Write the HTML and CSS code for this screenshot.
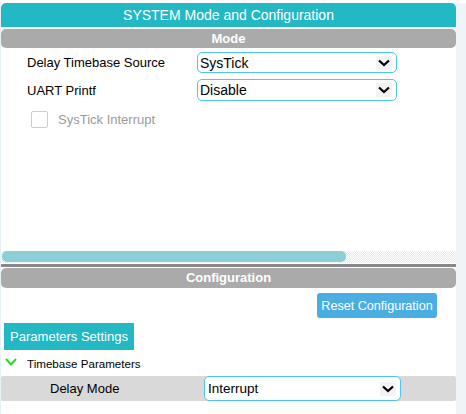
FILE: index.html
```html
<!DOCTYPE html>
<html>
<head>
<meta charset="utf-8">
<link rel="stylesheet" href="styles.css">
</head>
<body>
<div class="page">
  <div class="edge"></div>
  <div class="panel">
    <div class="title">SYSTEM Mode and Configuration</div>
    <div class="section-head mode-head">Mode</div>
    <div class="mode-body">
      <div class="row">
        <div class="label">Delay Timebase Source</div>
        <div class="select">
          <span class="value">SysTick</span>
          <span class="arrow"><svg width="12" height="8" viewBox="0 0 12 8"><path d="M1 1.5 L6 6 L11 1.5" fill="none" stroke="#000" stroke-width="2.2"/></svg></span>
        </div>
      </div>
      <div class="row row2">
        <div class="label">UART Printf</div>
        <div class="select">
          <span class="value">Disable</span>
          <span class="arrow"><svg width="12" height="8" viewBox="0 0 12 8"><path d="M1 1.5 L6 6 L11 1.5" fill="none" stroke="#000" stroke-width="2.2"/></svg></span>
        </div>
      </div>
      <div class="check-row">
        <span class="checkbox"></span>
        <span class="check-label">SysTick Interrupt</span>
      </div>
    </div>
    <div class="scrollbar"><div class="thumb"></div></div>
    <div class="divider"></div>
    <div class="section-head config-head">Configuration</div>
    <div class="config-body">
      <div class="reset-row"><button class="reset">Reset Configuration</button></div>
      <div class="tabs"><div class="tab">Parameters Settings</div></div>
      <div class="group">
        <svg class="chev" width="12" height="8" viewBox="0 0 12 8"><path d="M1 1 L6 6.5 L11 1" fill="none" stroke="#22dd22" stroke-width="2"/></svg>
        <span>Timebase Parameters</span>
      </div>
      <div class="param">
        <div class="param-label">Delay Mode</div>
        <div class="select param-select">
          <span class="value">Interrupt</span>
          <span class="arrow"><svg width="12" height="8" viewBox="0 0 12 8"><path d="M1 1.5 L6 6 L11 1.5" fill="none" stroke="#000" stroke-width="2.2"/></svg></span>
        </div>
      </div>
    </div>
  </div>
  <div class="side"></div>
</div>
</body>
</html>
```
FILE: styles.css
```css
html, body {
  margin: 0;
  padding: 0;
  background: #fff;
}
body {
  font-family: "Liberation Sans", Arial, sans-serif;
  font-size: 13px;
  color: #000;
}
.page {
  display: flex;
  width: 466px;
  height: 414px;
  padding-top: 3px;
  box-sizing: border-box;
  overflow: hidden;
}
.edge {
  width: 1px;
  background: #e6f1f6;
}
.side {
  width: 10px;
  background: #eef4f7;
}
.panel {
  width: 455px;
  display: flex;
  flex-direction: column;
}
.title {
  height: 24px;
  line-height: 24px;
  background: #22b8c4;
  color: #fff;
  font-size: 14px;
  text-align: center;
  border-radius: 5px 5px 0 0;
}
.section-head {
  background: #aaaaaa;
  color: #fff;
  font-weight: bold;
  font-size: 13px;
  text-align: center;
  border-radius: 5px;
}
.mode-head {
  margin-top: 2px;
  height: 19px;
  line-height: 19px;
}
.mode-body {
  height: 203px;
  padding-top: 4px;
  box-sizing: border-box;
}
.row {
  display: flex;
  align-items: center;
  height: 21px;
}
.row2 {
  margin-top: 6px;
  height: 22px;
}
.label {
  width: 170px;
  padding-left: 26px;
}
.select {
  box-sizing: border-box;
  width: 200px;
  height: 100%;
  border: 1px solid #4cc4f4;
  border-radius: 5px;
  display: flex;
  align-items: center;
  justify-content: space-between;
  padding: 0 4px 0 2px;
  background: #fff;
  font-size: 14px;
}
.value {
  line-height: 1;
}
.arrow {
  width: 16px;
  height: 14px;
  display: flex;
  align-items: center;
  justify-content: center;
  background: #f3f3f3;
}
.check-row {
  display: flex;
  align-items: center;
  margin-top: 10px;
  padding-left: 30px;
}
.checkbox {
  width: 17px;
  height: 17px;
  box-sizing: border-box;
  border: 1px solid #cccccc;
  border-radius: 2px;
  background: #fff;
}
.check-label {
  margin-left: 10px;
  color: #9a9a9a;
}
.scrollbar {
  height: 12px;
  background-color: #fff;
  background-image: repeating-conic-gradient(#d6ecf6 0% 25%, #ffffff 0% 50%);
  background-size: 2px 2px;
}
.thumb {
  width: 344px;
  height: 11px;
  margin-left: 1px;
  background: #8ccfd6;
  border-radius: 5px;
}
.divider {
  margin-top: 1px;
  height: 3px;
  background: #888888;
}
.config-head {
  margin-top: 1px;
  height: 20px;
  line-height: 20px;
}
.config-body {
  display: flex;
  flex-direction: column;
}
.reset-row {
  display: flex;
  justify-content: flex-end;
  padding-right: 19px;
  margin-top: 5px;
}
.reset {
  width: 120px;
  height: 25px;
  border: none;
  border-radius: 3px;
  background: #4aaee3;
  color: #fff;
  font-family: "Liberation Sans", Arial, sans-serif;
  font-size: 12.6px;
  padding: 0;
}
.tabs {
  margin-top: 5px;
  padding-left: 3px;
  display: flex;
}
.tab {
  width: 130px;
  height: 27px;
  line-height: 27px;
  background: #22b8c4;
  color: #fff;
  text-align: center;
  font-size: 13px;
}
.group {
  height: 26px;
  display: flex;
  align-items: center;
  font-size: 11.6px;
  padding-left: 4px;
}
.chev {
  margin-right: 10px;
  margin-top: -2px;
}
.param {
  height: 25px;
  background: #d9d9d9;
  display: flex;
  align-items: center;
  border-radius: 2px;
}
.param-label {
  width: 203px;
  padding-left: 49px;
  box-sizing: border-box;
}
.param-select {
  width: 197px;
  height: 25px;
  padding-left: 3px;
  font-size: 13.5px;
}
```
